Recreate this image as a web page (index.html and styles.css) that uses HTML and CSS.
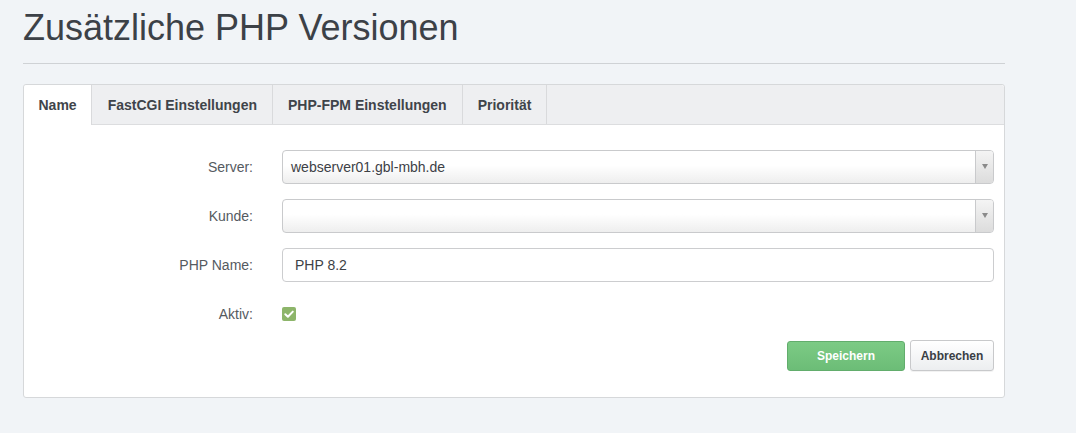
FILE: index.html
```html
<!DOCTYPE html>
<html lang="de">
<head>
<meta charset="utf-8">
<title>Zusätzliche PHP Versionen</title>
<link rel="stylesheet" href="styles.css">
</head>
<body>
<div class="page">
  <h1 class="title">Zusätzliche PHP Versionen</h1>
  <hr class="rule">
  <div class="panel">
    <div class="tabs">
      <div class="tab active">Name</div>
      <div class="tab">FastCGI Einstellungen</div>
      <div class="tab">PHP-FPM Einstellungen</div>
      <div class="tab">Priorität</div>
    </div>
    <form class="form">
      <div class="row">
        <label class="label">Server:</label>
        <div class="select">
          <span class="select-text">webserver01.gbl-mbh.de</span>
          <span class="select-arrow"><span class="tri"></span></span>
        </div>
      </div>
      <div class="row">
        <label class="label">Kunde:</label>
        <div class="select">
          <span class="select-text"></span>
          <span class="select-arrow"><span class="tri"></span></span>
        </div>
      </div>
      <div class="row">
        <label class="label">PHP Name:</label>
        <div class="input">PHP 8.2</div>
      </div>
      <div class="row">
        <label class="label">Aktiv:</label>
        <div class="field">
          <span class="checkbox">
            <svg width="14" height="14" viewBox="0 0 14 14"><path d="M3.3 7.2 L5.9 9.7 L10.8 4.6" fill="none" stroke="#fff" stroke-width="2" stroke-linecap="round" stroke-linejoin="round"/></svg>
          </span>
        </div>
      </div>
      <div class="actions">
        <button type="button" class="btn btn-save">Speichern</button>
        <button type="button" class="btn btn-cancel">Abbrechen</button>
      </div>
    </form>
  </div>
</div>
</body>
</html>
```

FILE: styles.css
```css
html, body {
  margin: 0;
  padding: 0;
  background: #f1f4f7;
  font-family: "Liberation Sans", Arial, sans-serif;
}

.page {
  padding: 8px 0 0 23px;
  width: 982px;
}

.title {
  margin: 0;
  font-size: 36px;
  line-height: 40px;
  font-weight: 400;
  color: #3c4147;
}

.rule {
  margin: 15px 0 0;
  border: 0;
  border-top: 1px solid #cfd2d5;
  height: 0;
}

.panel {
  margin-top: 20px;
  background: #fff;
  border: 1px solid #d6d8da;
  border-radius: 3px;
}

.tabs {
  display: flex;
  height: 39px;
  background: #eeeff1;
  border-bottom: 1px solid #dcdddf;
  border-radius: 3px 3px 0 0;
}

.tab {
  display: flex;
  align-items: center;
  padding: 0 15px;
  font-size: 14px;
  font-weight: 700;
  color: #3f444a;
  border-right: 1px solid #d9dadc;
}

.tab:first-child,
.tab:last-child {
  padding: 0 14.5px;
}

.tab:nth-child(2) {
  padding: 0 14.5px 0 15.5px;
}

.tab:nth-child(3) {
  padding: 0 15.5px;
}

.tab.active {
  background: #fff;
  height: 40px;
  border-radius: 3px 0 0 0;
}

.form {
  padding: 25px 10px 26px 0;
}

.row {
  display: grid;
  grid-template-columns: 229px 1fr;
  column-gap: 29px;
  align-items: center;
  height: 34px;
  margin-bottom: 15px;
}

.row:nth-child(4) {
  margin-bottom: 9px;
}

.label {
  text-align: right;
  font-size: 14px;
  color: #555a5f;
}

.select {
  display: flex;
  height: 32px;
  border: 1px solid #c9cacc;
  border-radius: 4px;
  background: linear-gradient(#ffffff 0%, #ffffff 45%, #eeeeee 100%);
  overflow: hidden;
}

.select-text {
  flex: 1;
  display: flex;
  align-items: center;
  padding-left: 8px;
  font-size: 14px;
  color: #3d4146;
}

.select-arrow {
  width: 17px;
  border-left: 1px solid #c9cacc;
  background: linear-gradient(#f4f4f4, #dcdcdc);
  display: flex;
  align-items: center;
  justify-content: center;
}

.tri {
  width: 0;
  height: 0;
  border-left: 3.5px solid transparent;
  border-right: 3.5px solid transparent;
  border-top: 5px solid #8a8a8a;
  margin-top: -2px;
}

.input {
  height: 32px;
  border: 1px solid #cccdcf;
  border-radius: 4px;
  display: flex;
  align-items: center;
  padding-left: 12px;
  font-size: 14px;
  color: #3d4146;
  background: #fff;
}

.field {
  display: flex;
  align-items: center;
}

.checkbox {
  width: 14px;
  height: 14px;
  border-radius: 2px;
  background: #8db56a;
  display: block;
}

.checkbox svg {
  display: block;
}

.actions {
  display: flex;
  justify-content: flex-end;
  align-items: flex-start;
  gap: 5px;
}

.btn {
  font-family: "Liberation Sans", Arial, sans-serif;
  font-size: 12px;
  font-weight: 700;
  border-radius: 3px;
  cursor: pointer;
}

.btn-save {
  width: 118px;
  height: 30px;
  margin-top: 1px;
  color: #fff;
  border: 1px solid #62ad6c;
  background: linear-gradient(#7ccb85, #6cbd77);
}

.btn-cancel {
  width: 84px;
  height: 31px;
  color: #3a3f45;
  border: 1px solid #c8c9cb;
  background: linear-gradient(#ffffff, #eceef0);
  box-shadow: 0 1px 0 rgba(0,0,0,0.05);
}
```
